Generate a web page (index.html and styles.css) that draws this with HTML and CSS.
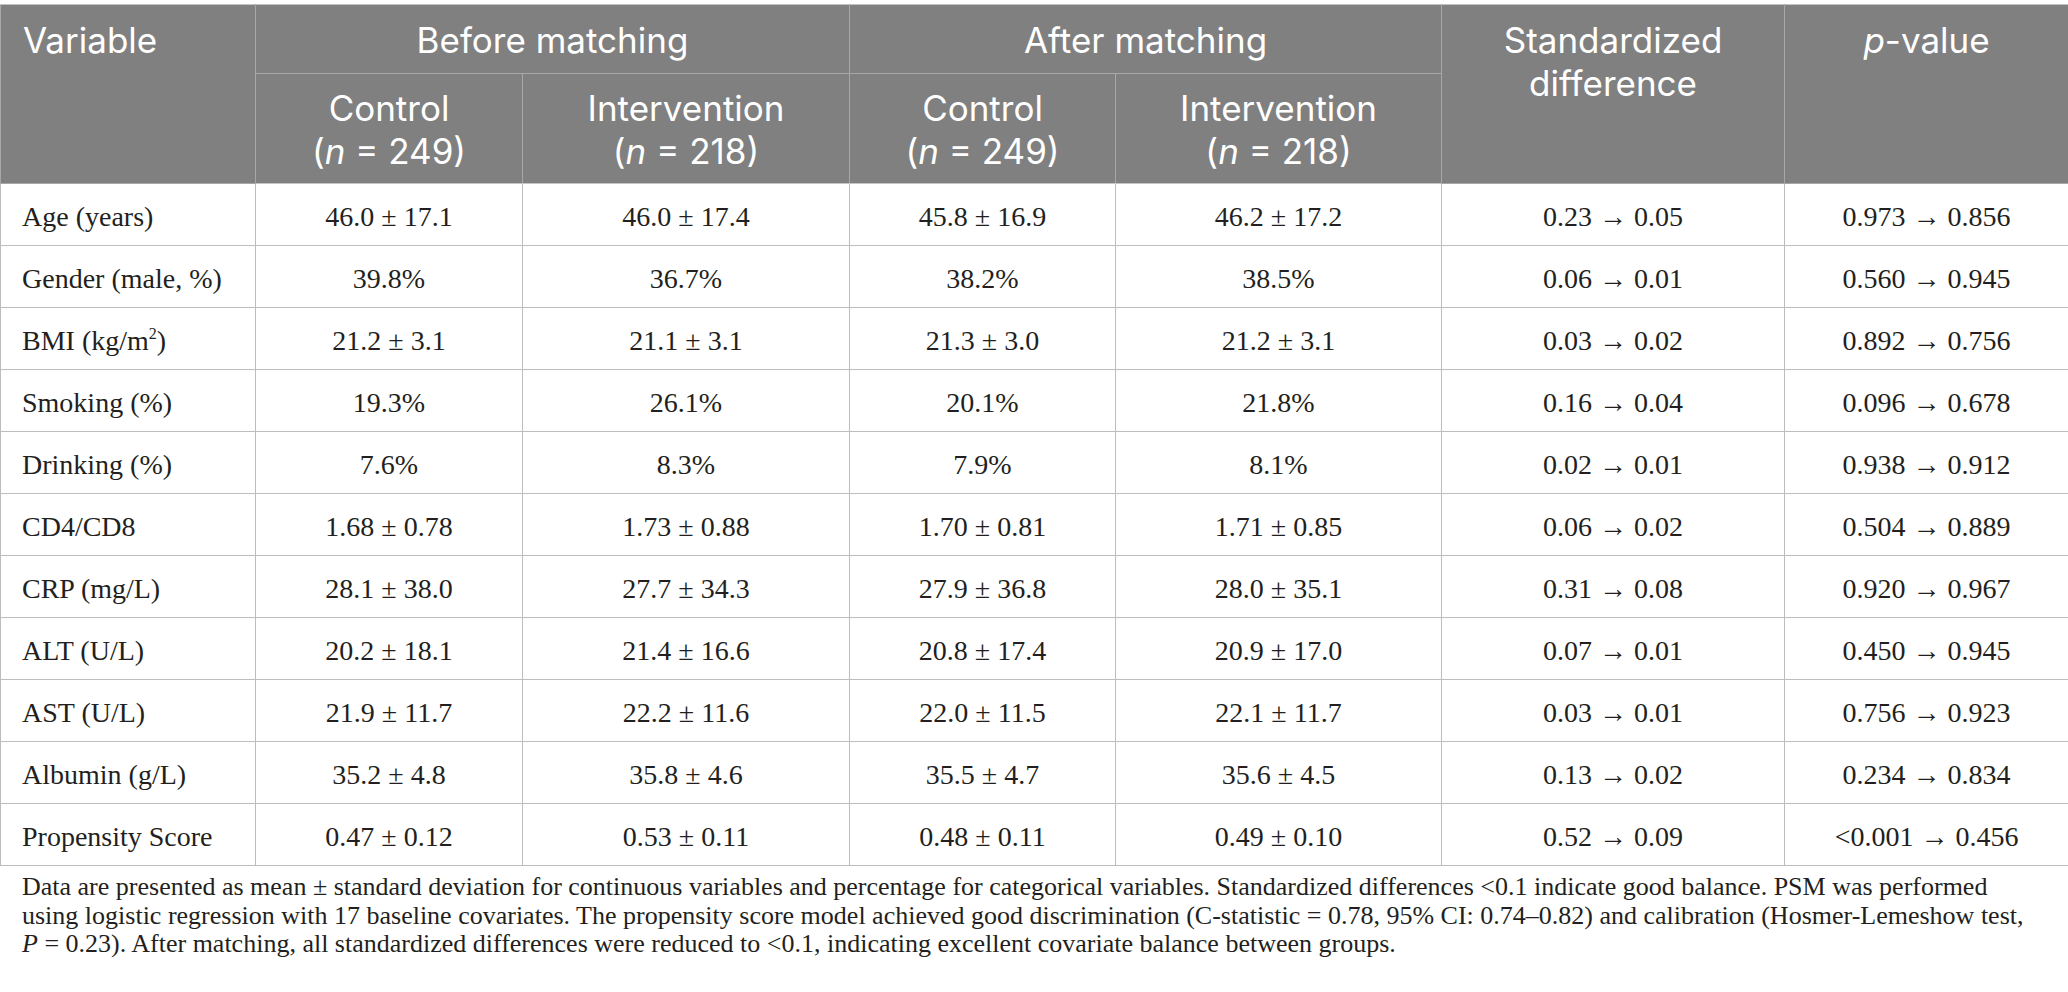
FILE: index.html
```html
<!DOCTYPE html>
<html lang="en">
<head>
<meta charset="utf-8">
<title>Propensity score matching balance</title>
<link rel="stylesheet" href="styles.css">
</head>
<body>
<div class="wrap">
<table class="psm">
  <colgroup>
    <col class="c-var"><col class="c-bc"><col class="c-bi"><col class="c-ac"><col class="c-ai"><col class="c-sd"><col class="c-p">
  </colgroup>
  <thead>
    <tr class="h1">
      <th rowspan="2" class="left top">Variable</th>
      <th colspan="2">Before matching</th>
      <th colspan="2">After matching</th>
      <th rowspan="2" class="top">Standardized<br>difference</th>
      <th rowspan="2" class="top"><i>p</i>-value</th>
    </tr>
    <tr class="h2">
      <th>Control<br>(<i>n</i> = 249)</th>
      <th>Intervention<br>(<i>n</i> = 218)</th>
      <th>Control<br>(<i>n</i> = 249)</th>
      <th>Intervention<br>(<i>n</i> = 218)</th>
    </tr>
  </thead>
  <tbody>
    <tr><td class="left">Age (years)</td><td>46.0 ± 17.1</td><td>46.0 ± 17.4</td><td>45.8 ± 16.9</td><td>46.2 ± 17.2</td><td>0.23 → 0.05</td><td>0.973 → 0.856</td></tr>
    <tr><td class="left">Gender (male, %)</td><td>39.8%</td><td>36.7%</td><td>38.2%</td><td>38.5%</td><td>0.06 → 0.01</td><td>0.560 → 0.945</td></tr>
    <tr><td class="left">BMI (kg/m<sup>2</sup>)</td><td>21.2 ± 3.1</td><td>21.1 ± 3.1</td><td>21.3 ± 3.0</td><td>21.2 ± 3.1</td><td>0.03 → 0.02</td><td>0.892 → 0.756</td></tr>
    <tr><td class="left">Smoking (%)</td><td>19.3%</td><td>26.1%</td><td>20.1%</td><td>21.8%</td><td>0.16 → 0.04</td><td>0.096 → 0.678</td></tr>
    <tr><td class="left">Drinking (%)</td><td>7.6%</td><td>8.3%</td><td>7.9%</td><td>8.1%</td><td>0.02 → 0.01</td><td>0.938 → 0.912</td></tr>
    <tr><td class="left">CD4/CD8</td><td>1.68 ± 0.78</td><td>1.73 ± 0.88</td><td>1.70 ± 0.81</td><td>1.71 ± 0.85</td><td>0.06 → 0.02</td><td>0.504 → 0.889</td></tr>
    <tr><td class="left">CRP (mg/L)</td><td>28.1 ± 38.0</td><td>27.7 ± 34.3</td><td>27.9 ± 36.8</td><td>28.0 ± 35.1</td><td>0.31 → 0.08</td><td>0.920 → 0.967</td></tr>
    <tr><td class="left">ALT (U/L)</td><td>20.2 ± 18.1</td><td>21.4 ± 16.6</td><td>20.8 ± 17.4</td><td>20.9 ± 17.0</td><td>0.07 → 0.01</td><td>0.450 → 0.945</td></tr>
    <tr><td class="left">AST (U/L)</td><td>21.9 ± 11.7</td><td>22.2 ± 11.6</td><td>22.0 ± 11.5</td><td>22.1 ± 11.7</td><td>0.03 → 0.01</td><td>0.756 → 0.923</td></tr>
    <tr><td class="left">Albumin (g/L)</td><td>35.2 ± 4.8</td><td>35.8 ± 4.6</td><td>35.5 ± 4.7</td><td>35.6 ± 4.5</td><td>0.13 → 0.02</td><td>0.234 → 0.834</td></tr>
    <tr><td class="left">Propensity Score</td><td>0.47 ± 0.12</td><td>0.53 ± 0.11</td><td>0.48 ± 0.11</td><td>0.49 ± 0.10</td><td>0.52 → 0.09</td><td>&lt;0.001 → 0.456</td></tr>
  </tbody>
</table>
<p class="note">Data are presented as mean ± standard deviation for continuous variables and percentage for categorical variables. Standardized differences &lt;0.1 indicate good balance. PSM was performed<br>using logistic regression with 17 baseline covariates. The propensity score model achieved good discrimination (C-statistic = 0.78, 95% CI: 0.74–0.82) and calibration (Hosmer-Lemeshow test,<br><i>P</i> = 0.23). After matching, all standardized differences were reduced to &lt;0.1, indicating excellent covariate balance between groups.</p>
</div>
</body>
</html>
```

FILE: styles.css
```css
html, body {
  margin: 0;
  padding: 0;
  background: #ffffff;
}

body {
  padding-top: 4px;
  font-family: "Liberation Serif", "Times New Roman", serif;
  color: #231f20;
}

.wrap {
  width: 2068px;
}

.psm {
  width: 2068px;
  table-layout: fixed;
  border-collapse: collapse;
}

.c-var { width: 255px; }
.c-bc { width: 267px; }
.c-bi { width: 327px; }
.c-ac { width: 266px; }
.c-ai { width: 326px; }
.c-sd { width: 343px; }
.c-p { width: 284px; }

.psm th {
  background: #808080;
  color: #ffffff;
  font-family: Inter, "Open Sans", sans-serif;
  font-weight: 400;
  font-size: 35px;
  line-height: 43px;
  text-align: center;
  vertical-align: middle;
  border: 1px solid #a7a7a7;
  white-space: nowrap;
}

.psm thead tr:first-child th {
  border-top: 1px solid #c2c2c2;
}

.psm .h1 th {
  padding: 14px 16px 11px;
}

.psm .h2 th {
  padding: 13px 16px 10px;
}

.psm th.top {
  vertical-align: top;
}

.psm th.left {
  text-align: left;
  padding-left: 22px;
}

.psm td {
  font-size: 28px;
  line-height: 31px;
  padding: 17px 16px 13px;
  text-align: center;
  vertical-align: top;
  border: 1px solid #bdbdbd;
  white-space: nowrap;
}

.psm td.left {
  text-align: left;
  padding-left: 21px;
}

.psm thead tr:last-child th {
  border-bottom: 1px solid #c4c4c4;
}

.psm sup {
  font-size: 16px;
  line-height: 0;
  vertical-align: 11px;
}

.note {
  margin: 7px 0 0;
  padding-left: 22px;
  font-size: 26px;
  line-height: 28.5px;
  white-space: nowrap;
}
```
